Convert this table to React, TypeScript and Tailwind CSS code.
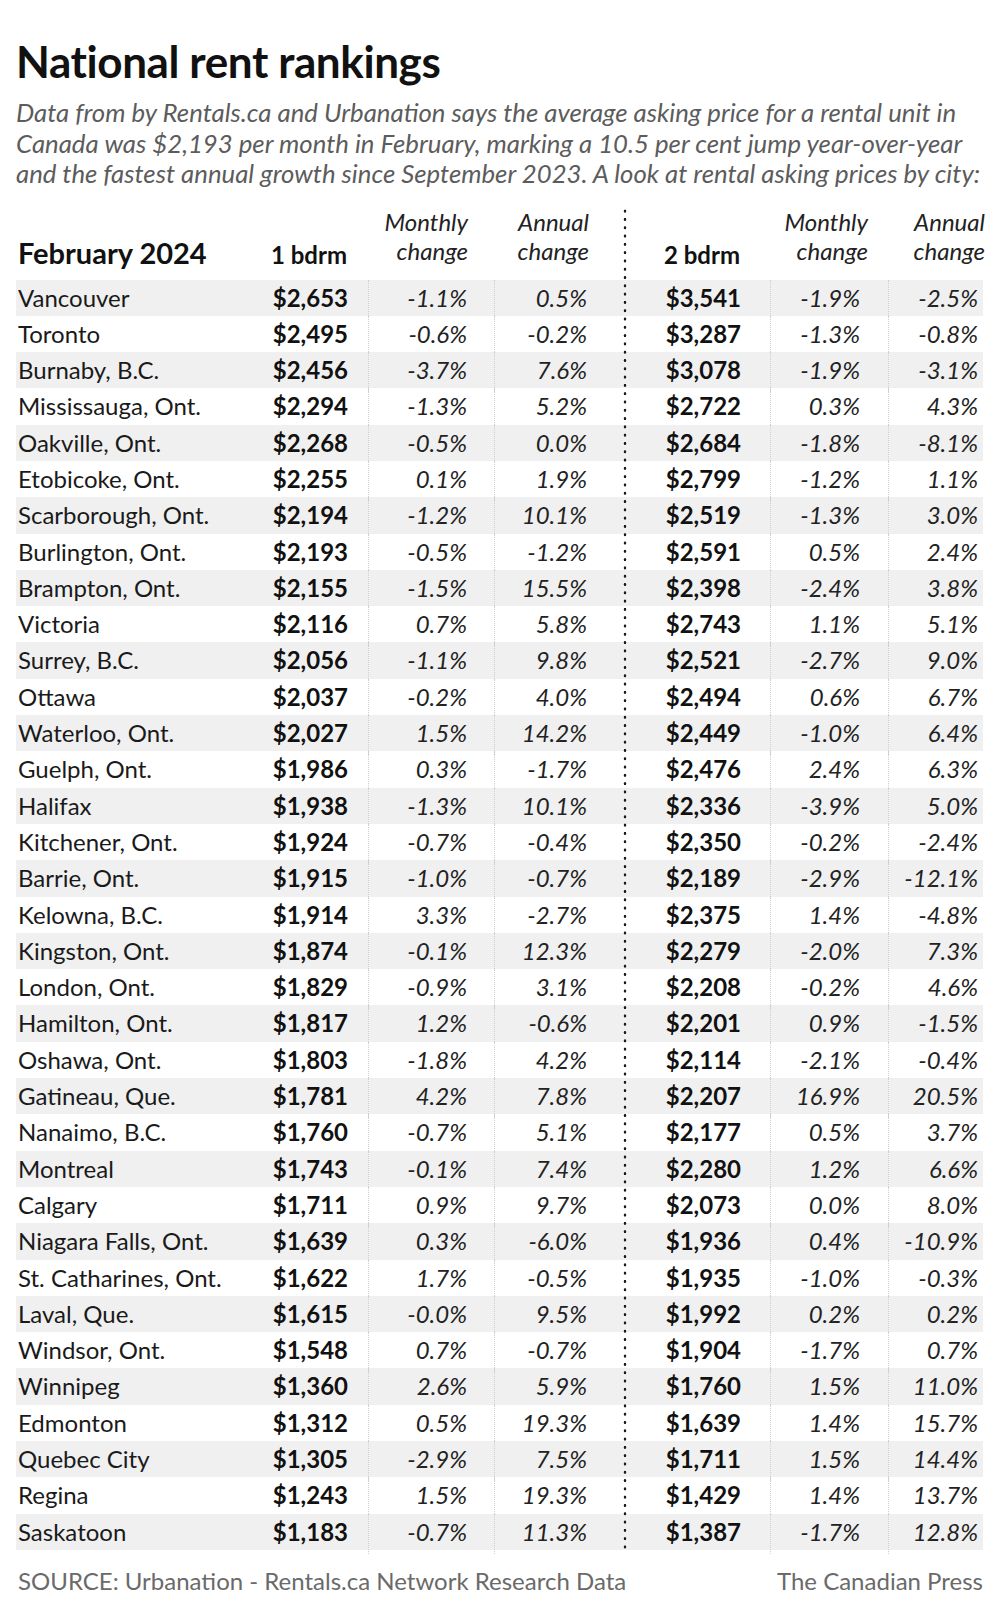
import React from "react";

type Row = [string, string, string, string, string, string, string];

const rows: Row[] = [
	["Vancouver", "$2,653", "-1.1%", "0.5%", "$3,541", "-1.9%", "-2.5%"],
	["Toronto", "$2,495", "-0.6%", "-0.2%", "$3,287", "-1.3%", "-0.8%"],
	["Burnaby, B.C.", "$2,456", "-3.7%", "7.6%", "$3,078", "-1.9%", "-3.1%"],
	["Mississauga, Ont.", "$2,294", "-1.3%", "5.2%", "$2,722", "0.3%", "4.3%"],
	["Oakville, Ont.", "$2,268", "-0.5%", "0.0%", "$2,684", "-1.8%", "-8.1%"],
	["Etobicoke, Ont.", "$2,255", "0.1%", "1.9%", "$2,799", "-1.2%", "1.1%"],
	["Scarborough, Ont.", "$2,194", "-1.2%", "10.1%", "$2,519", "-1.3%", "3.0%"],
	["Burlington, Ont.", "$2,193", "-0.5%", "-1.2%", "$2,591", "0.5%", "2.4%"],
	["Brampton, Ont.", "$2,155", "-1.5%", "15.5%", "$2,398", "-2.4%", "3.8%"],
	["Victoria", "$2,116", "0.7%", "5.8%", "$2,743", "1.1%", "5.1%"],
	["Surrey, B.C.", "$2,056", "-1.1%", "9.8%", "$2,521", "-2.7%", "9.0%"],
	["Ottawa", "$2,037", "-0.2%", "4.0%", "$2,494", "0.6%", "6.7%"],
	["Waterloo, Ont.", "$2,027", "1.5%", "14.2%", "$2,449", "-1.0%", "6.4%"],
	["Guelph, Ont.", "$1,986", "0.3%", "-1.7%", "$2,476", "2.4%", "6.3%"],
	["Halifax", "$1,938", "-1.3%", "10.1%", "$2,336", "-3.9%", "5.0%"],
	["Kitchener, Ont.", "$1,924", "-0.7%", "-0.4%", "$2,350", "-0.2%", "-2.4%"],
	["Barrie, Ont.", "$1,915", "-1.0%", "-0.7%", "$2,189", "-2.9%", "-12.1%"],
	["Kelowna, B.C.", "$1,914", "3.3%", "-2.7%", "$2,375", "1.4%", "-4.8%"],
	["Kingston, Ont.", "$1,874", "-0.1%", "12.3%", "$2,279", "-2.0%", "7.3%"],
	["London, Ont.", "$1,829", "-0.9%", "3.1%", "$2,208", "-0.2%", "4.6%"],
	["Hamilton, Ont.", "$1,817", "1.2%", "-0.6%", "$2,201", "0.9%", "-1.5%"],
	["Oshawa, Ont.", "$1,803", "-1.8%", "4.2%", "$2,114", "-2.1%", "-0.4%"],
	["Gatineau, Que.", "$1,781", "4.2%", "7.8%", "$2,207", "16.9%", "20.5%"],
	["Nanaimo, B.C.", "$1,760", "-0.7%", "5.1%", "$2,177", "0.5%", "3.7%"],
	["Montreal", "$1,743", "-0.1%", "7.4%", "$2,280", "1.2%", "6.6%"],
	["Calgary", "$1,711", "0.9%", "9.7%", "$2,073", "0.0%", "8.0%"],
	["Niagara Falls, Ont.", "$1,639", "0.3%", "-6.0%", "$1,936", "0.4%", "-10.9%"],
	["St. Catharines, Ont.", "$1,622", "1.7%", "-0.5%", "$1,935", "-1.0%", "-0.3%"],
	["Laval, Que.", "$1,615", "-0.0%", "9.5%", "$1,992", "0.2%", "0.2%"],
	["Windsor, Ont.", "$1,548", "0.7%", "-0.7%", "$1,904", "-1.7%", "0.7%"],
	["Winnipeg", "$1,360", "2.6%", "5.9%", "$1,760", "1.5%", "11.0%"],
	["Edmonton", "$1,312", "0.5%", "19.3%", "$1,639", "1.4%", "15.7%"],
	["Quebec City", "$1,305", "-2.9%", "7.5%", "$1,711", "1.5%", "14.4%"],
	["Regina", "$1,243", "1.5%", "19.3%", "$1,429", "1.4%", "13.7%"],
	["Saskatoon", "$1,183", "-0.7%", "11.3%", "$1,387", "-1.7%", "12.8%"],
];

const cols = "grid grid-cols-[234px_118px_126px_131px_145px_118px_95px]";
const thin = "border-l border-dotted border-[#cfcfcf]";
const twoLine = "mb-[2px] text-right text-[24px] italic leading-[29px] text-[#222]";

const App = () => {
	return (
		<div className="min-h-[1624px] bg-white px-[16px] font-['Lato',sans-serif] text-[#111]">
			<h1 className="pt-[39px] text-[44px] font-bold leading-[44px] tracking-[-0.4px]">National rent rankings</h1>
			<p className="mt-[14px] text-[25.75px] italic leading-[30.5px] text-[#5c5c5c]">
				<span className="block whitespace-nowrap">
					Data from by Rentals.ca and Urbanation says the average asking price for a rental unit in
				</span>
				<span className="block whitespace-nowrap">
					Canada was $2,193 per month in February, marking a 10.5 per cent jump year-over-year
				</span>
				<span className="block whitespace-nowrap">
					and the fastest annual growth since September 2023. A look at rental asking prices by city:
				</span>
			</p>

			<div className="relative mt-[18px] w-[967px]">
				{/* header */}
				<div className={`${cols} items-end pb-[13px]`}>
					<div className="pl-[2px] text-[29px] font-bold leading-[29px]">February 2024</div>
					<div className="pr-[21px] text-right text-[24px] font-bold leading-[24px]">1 bdrm</div>
					<div className={`${twoLine} pr-[26px]`}>
						Monthly
						<br />
						change
					</div>
					<div className={`${twoLine} pr-[36px]`}>
						Annual
						<br />
						change
					</div>
					<div className="pr-[30px] text-right text-[24px] font-bold leading-[24px]">2 bdrm</div>
					<div className={`${twoLine} pr-[20px]`}>
						Monthly
						<br />
						change
					</div>
					<div className={`${twoLine} -mr-[2px]`}>
						Annual
						<br />
						change
					</div>
				</div>

				{/* body */}
				{rows.map((r, i) => (
					<div
						key={r[0]}
						className={`${cols} h-[36.3px] text-[24px] leading-[36.3px] ${i % 2 === 0 ? "bg-[#f0f0f0]" : "bg-white"}`}
					>
						<div className="pl-[2px] pb-[4px] whitespace-nowrap text-[#1a1a1a]">{r[0]}</div>
						<div className="pr-[20px] pb-[4px] text-right font-bold">{r[1]}</div>
						<div className={`${thin} pr-[27px] pb-[4px] text-right italic text-[#222]`}>{r[2]}</div>
						<div className={`${thin} pr-[38px] pb-[4px] text-right italic text-[#222]`}>{r[3]}</div>
						<div className="pr-[29px] pb-[4px] text-right font-bold">{r[4]}</div>
						<div className={`${thin} pr-[28px] pb-[4px] text-right italic text-[#222]`}>{r[5]}</div>
						<div className={`${thin} pr-[5px] pb-[4px] text-right italic text-[#222]`}>{r[6]}</div>
					</div>
				))}

				{/* heavy dotted divider between 1 and 2 bedroom blocks */}
				<div className="absolute top-0 bottom-0 left-[607px] w-[4px] bg-[radial-gradient(circle,#1a1a1a_1.2px,transparent_1.6px)] bg-[length:4px_8.3px] bg-repeat-y" />
			</div>

			<div className="mt-[19px] flex w-[967px] justify-between text-[24px] leading-[24px] text-[#6a6a6a]">
				<span className="pl-[2px]">SOURCE: Urbanation - Rentals.ca Network Research Data</span>
				<span>The Canadian Press</span>
			</div>
		</div>
	);
};

export default App;
